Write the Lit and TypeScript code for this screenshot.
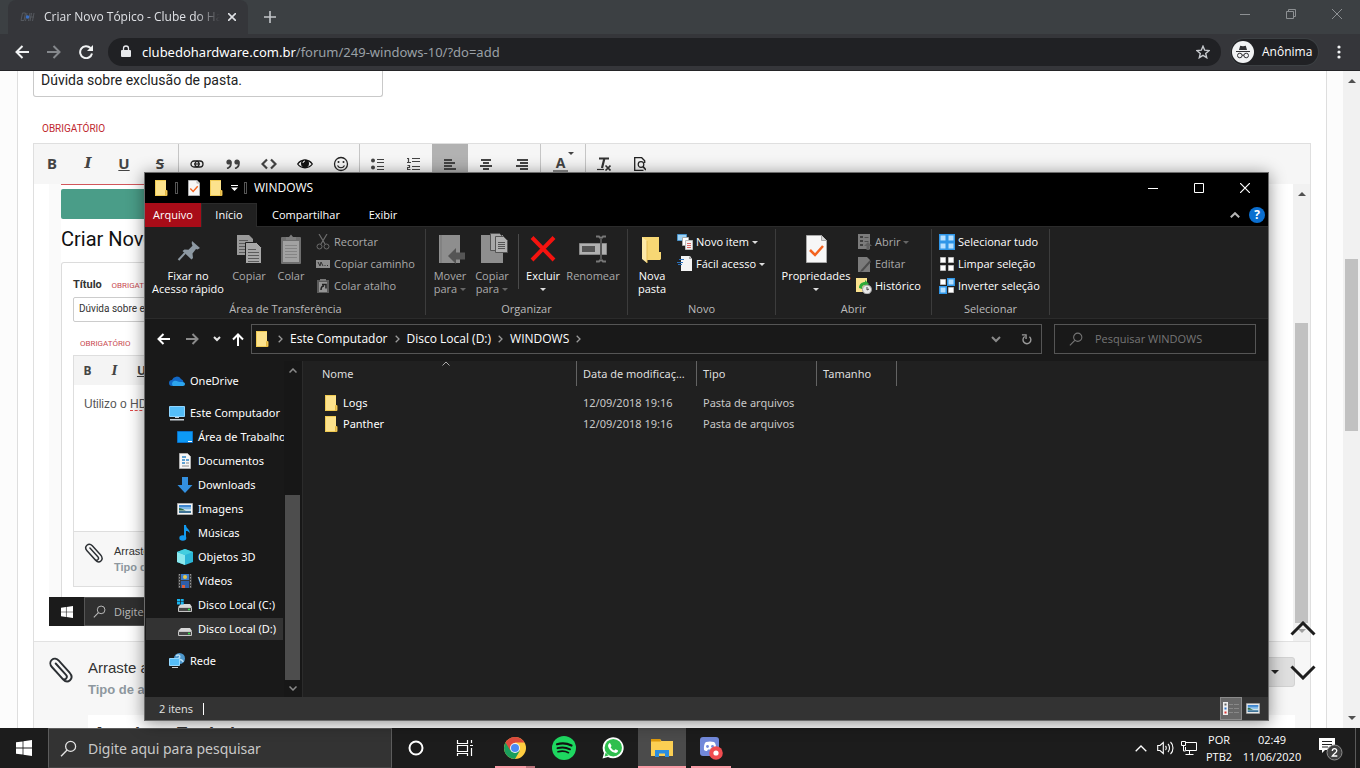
import { LitElement, html, svg, css } from "lit";
import { customElement } from "lit/decorators.js";
import { classMap } from "lit/directives/class-map.js";

const icon = (w: number, h: number, body: unknown, vb = `0 0 ${w} ${h}`) =>
  html`<svg width=${w} height=${h} viewBox=${vb} fill="none" aria-hidden="true">${body}</svg>`;

const line = (d: string, color: string, width = 1) =>
  svg`<path d=${d} stroke=${color} stroke-width=${width} fill="none"/>`;

/* ---------- shared glyphs ---------- */
const folder = () => icon(14, 16, svg`
  <path d="M1 0h11v11h1v5H1z" fill="#fce28c"/>
  <path d="M1 0h11v1H2v14h10v1H1z" fill="#f0ca52"/>
  <path d="M11.500 10.500h1.500v5h-1.500z" fill="#f9d877" stroke="#e3b63f"/>`);

const sheetCheck = (w: number, h: number) => icon(w, h, svg`
  <path d="M.5.5h15l5 5v22H.5z" fill="#f7f7f7" stroke="#a8a8a8"/>
  <path d="M15.500.5v5h5" fill="#d8d8d8" stroke="#a8a8a8"/>
  <path d="M4 15l5 5 8-9" stroke="#f4631e" stroke-width="2.500"/>`, "0 0 21 28");

const magnifier = (size: number, color: string) => icon(size, size, svg`
  <circle cx="10" cy="6" r="4.700" stroke=${color} stroke-width="1.200"/>
  <path d="M6.700 9.500L1 15.200" stroke=${color} stroke-width="1.300"/>`, "0 0 16 16");

const winLogo = (size: number) => icon(size, size, svg`
  <path d="M0 2.300L6.600 1.400V7.600H0zM7.400 1.300L16 0v7.600H7.400zM0 8.400h6.600v6.200L0 13.700zM7.400 8.400H16V16l-8.600-1.200z" fill="#fff"/>`, "0 0 16 16");

const clip = (size: number) => icon(size, size, svg`
  <path d="M7.200 6.500l10.300 11.300c1.300 1.500.9 3-.1 3.900-1.100.9-2.700.8-3.900-.5L3.400 10C1.300 7.600 1.300 4.700 3.300 2.900 5.400 1.100 8.300 1.500 10.300 3.700l10.600 11.700c2.700 3.100 2.600 6.100.6 7.900-1.700 1.500-4.500 1.700-7-.9L6.300 13.200" stroke="#2b2f33" stroke-width="1.900" stroke-linecap="round"/>`, "0 0 25 26");

const caret = (color: string) => icon(6, 3, svg`<path d="M0 0h6L3 3z" fill=${color}/>`);
const arrowUp = (color: string) => icon(8, 4, svg`<path d="M0 4h8L4 0z" fill=${color}/>`);
const arrowDown = (color: string) => icon(8, 4, svg`<path d="M0 0h8L4 4z" fill=${color}/>`);

const picture = (w: number, h: number) => icon(w, h, svg`
  <path d="M.5.5h15v11H.5z" fill="#f5f5f5" stroke="#a9a9a9"/>
  <path d="M2 2h12v8H2z" fill="#7db7e8"/><path d="M2 2h12v2H2z" fill="#3f86cf"/>
  <path d="M2 6c4-1 7 1 12 0v4H2z" fill="#cfe5ee"/><path d="M2 5c3 0 5 2 7 2.500H2z" fill="#2e6b45"/><path d="M2 8h12v2H2z" fill="#3e7397"/>`, "0 0 16 12");

const reset = css`
  *, *::before, *::after { box-sizing: border-box; }
  button, input { font: inherit; color: inherit; background: none; border: 0; padding: 0; margin: 0; border-radius: 0; outline: 0; min-width: 0; }
  a { color: inherit; text-decoration: none; }
  svg { display: block; flex: none; }
`;

/* ---------- browser frame ---------- */
@customElement("browser-frame")
export class BrowserFrame extends LitElement {
  static styles = [reset, css`
    :host { display: block; color: #e8eaed; font: 12px/16px "Open Sans", sans-serif; }
    .strip { display: flex; height: 34px; background: #3c4043; padding-left: 8px; }
    .tab { display: flex; align-items: center; width: 240px; background: #35363a; border-radius: 8px 8px 0 0; padding: 0 8px 0 12px; }
    .title { flex: 1; margin: 0 4px 0 8px; white-space: nowrap; overflow: hidden; color: #dfe1e5;
      -webkit-mask-image: linear-gradient(90deg, #000 86%, transparent); mask-image: linear-gradient(90deg, #000 86%, transparent); }
    .icon { display: grid; place-items: center; width: 16px; height: 34px; }
    .plus { width: 44px; }
    .captions { display: flex; margin-left: auto; }
    .captions .icon { width: 46px; height: 28px; }
    .bar { display: flex; align-items: center; height: 37px; background: #35363a; border-bottom: 1px solid #242427; padding: 0 8px 0 6px; }
    .nav { width: 32px; }
    .omni { display: flex; align-items: center; flex: 1; height: 28px; margin: 0 10px 0 6px; padding: 0 11px 0 12px; border-radius: 14px; background: #202124; font: 13px/18px "Noto Sans", sans-serif; }
    .url { flex: 1; margin-left: 10px; color: #9aa0a6; white-space: nowrap; }
    .url b { font-weight: 400; color: #fff; }
    .profile { display: flex; align-items: center; gap: 8px; height: 26px; width: 87px; padding: 0 8px 0 1px; border-radius: 13px; background: #202124; box-shadow: 0 0 0 1px #3c4043; color: #fff; }
    .menu { width: 26px; margin-left: 8px; }
  `];
  render() {
    return html`
      <div class="strip">
        <div class="tab">
          ${icon(16, 10, svg`<path d="M2.500 1h3L4 8.500H1zM7 1L5.500 9M10 1L8.500 9M14 1l-1.500 8M11.500 1L10 9M10 5h4" stroke="#54585e"/><circle cx="7.500" cy="5" r="1.800" fill="#3a6fc4"/>`)}
          <span class="title">Criar Novo Tópico - Clube do Hardware</span>
          <button class="icon" aria-label="Fechar guia">${icon(8, 8, line("M0 0l8 8M8 0L0 8", "#dfe1e5", 1.6))}</button>
        </div>
        <button class="icon plus" aria-label="Nova guia">${icon(12, 12, line("M6 0v12M0 6h12", "#c3c6ca", 1.6))}</button>
        <div class="captions">
          <button class="icon" aria-label="Minimizar">${icon(10, 10, line("M0 5.500h10", "#8d9093"))}</button>
          <button class="icon" aria-label="Restaurar">${icon(10, 10, line("M.5 2.500h7v7h-7zM2.500 2.500v-2h7v7h-2", "#8d9093"))}</button>
          <button class="icon" aria-label="Fechar">${icon(10, 10, line("M0 0l10 10M10 0L0 10", "#8d9093"))}</button>
        </div>
      </div>
      <div class="bar">
        <button class="icon nav" aria-label="Voltar">${icon(14, 14, line("M14 7H1.500M7.500 1l-6 6 6 6", "#f1f3f4", 2))}</button>
        <button class="icon nav" aria-label="Avançar">${icon(14, 14, line("M0 7h12.500M6.500 1l6 6-6 6", "#85888c", 2))}</button>
        <button class="icon nav" aria-label="Recarregar">${icon(14, 14, svg`<path d="M11.500 3A6 6 0 1 0 13 8.500" stroke="#f1f3f4" stroke-width="2"/><path d="M14 0v6H8z" fill="#f1f3f4"/>`)}</button>
        <div class="omni">
          ${icon(12, 14, svg`<path d="M2 5h8a1 1 0 0 1 1 1v5a1 1 0 0 1-1 1H2a1 1 0 0 1-1-1V6a1 1 0 0 1 1-1z" fill="#e8eaed"/><path d="M3.500 5V3.500a2.500 2.500 0 0 1 5 0V5" stroke="#e8eaed" stroke-width="1.300"/>`)}
          <a class="url" href="#"><b>clubedohardware.com.br</b>/forum/249-windows-10/?do=add</a>
          <button aria-label="Favoritos">${icon(14, 14, svg`<path d="M7 1.200l1.700 4 4.300.4-3.300 2.800 1 4.300L7 10.400l-3.700 2.300 1-4.300L1 5.600l4.300-.4z" stroke="#c6c9cd" stroke-width="1.400"/>`)}</button>
        </div>
        <button class="profile">
          ${icon(22, 22, svg`<circle cx="11" cy="11" r="11" fill="#f1f3f4"/><path d="M7 9l1.200-4.300L11 5.200l2.800-.5L15 9zM4 10h14v1H4z" fill="#303134"/><circle cx="7.800" cy="14.500" r="2.300" stroke="#303134"/><circle cx="14.200" cy="14.500" r="2.300" stroke="#303134"/><path d="M10 14.200h2" stroke="#303134"/>`)}
          Anônima
        </button>
        <button class="icon menu" aria-label="Menu">${icon(4, 14, svg`<circle cx="2" cy="2" r="1.600" fill="#f1f3f4"/><circle cx="2" cy="7" r="1.600" fill="#f1f3f4"/><circle cx="2" cy="12" r="1.600" fill="#f1f3f4"/>`)}</button>
      </div>`;
  }
}

/* ---------- forum page ---------- */
const listLines = (rows: number[][]) => rows.map(([x, w], i) => svg`<path d=${`M${x} ${i * 3 + 1}h${w}`} stroke="#444" stroke-width="2"/>`);

const tools: { label: string; art: unknown; on?: boolean }[][] = [
  [
    { label: "Negrito", art: html`<b>B</b>` },
    { label: "Itálico", art: html`<b class="serif"><i>I</i></b>` },
    { label: "Sublinhado", art: html`<b><u>U</u></b>` },
    { label: "Tachado", art: html`<b><s>S</s></b>` },
  ],
  [
    { label: "Link", art: icon(14, 8, svg`<rect x="1" y="1" width="8" height="6" rx="3" stroke="#222" stroke-width="1.300"/><rect x="5" y="1" width="8" height="6" rx="3" stroke="#222" stroke-width="1.300"/><path d="M4 4h6" stroke="#222" stroke-width="1.200"/>`) },
    { label: "Citação", art: icon(14, 10, svg`<circle cx="3" cy="3" r="2.600" fill="#444"/><circle cx="11" cy="3" r="2.600" fill="#444"/><path d="M4.600 2.500C5.500 6 4 8.500 1 9.500M12.600 2.500C13.500 6 12 8.500 9 9.500" stroke="#444" stroke-width="1.700"/>`) },
    { label: "Código", art: icon(16, 12, line("M6 1.500L1.500 6 6 10.500M10 1.500L14.500 6 10 10.500", "#444", 2.2)) },
    { label: "Spoiler", art: icon(16, 12, svg`<path d="M.7 6C4 1 12 1 15.300 6 12 11 4 11 .7 6z" stroke="#111" stroke-width="1.300"/><circle cx="8" cy="5.500" r="4" fill="#111"/><path d="M6 5a2 2 0 0 1 2-2" stroke="#fff"/>`) },
    { label: "Emoji", art: icon(16, 16, svg`<circle cx="8" cy="8" r="6.500" stroke="#222" stroke-width="1.300"/><circle cx="5.500" cy="6" r="1" fill="#222"/><circle cx="10.500" cy="6" r="1" fill="#222"/><path d="M4.500 9.500c1.500 3 5.500 3 7 0" stroke="#222" stroke-width="1.200"/>`) },
  ],
  [
    { label: "Marcadores", art: icon(14, 12, svg`<circle cx="2" cy="2.500" r="2" fill="#444"/><circle cx="2" cy="9.500" r="2" fill="#444"/>${line("M6 1.500h7M6 4.500h7M6 8.500h7M6 11.500h7", "#444")}`) },
    { label: "Numeração", art: icon(14, 14, line("M0 1.500h1.500V5M0 5.500h4M.5 8.500h2v2h-2v2h3M5 1.500h8M5 4.500h8M5 9.500h8M5 12.500h8", "#444", 1.2)) },
    { label: "Esquerda", on: true, art: icon(12, 11, listLines([[0, 8], [0, 11], [0, 8], [0, 12]])) },
    { label: "Centro", art: icon(12, 11, listLines([[1, 10], [3, 6], [0, 12], [3, 6]])) },
    { label: "Direita", art: icon(12, 11, listLines([[1, 11], [4, 8], [0, 12], [4, 8]])) },
  ],
];

@customElement("forum-page")
export class ForumPage extends LitElement {
  static styles = [reset, css`
    :host { display: flex; min-height: 0; background: #fcfcfc; color: #222; font: 14px/18px Roboto, sans-serif; }
    .sheet { display: flex; flex-direction: column; flex: 1; min-width: 0; margin: 0 16px 0 17px; padding: 0 15px; background: #fff; border: solid #dedede; border-width: 0 1px; }
    .title { width: 350px; height: 26px; padding: 0 7px 8px; border: 1px solid #c9c9c9; border-top: 0; border-radius: 0 0 3px 3px; }
    .must { color: #c0292f; font-size: 10px; line-height: 14px; padding: 25px 0 7px 9px; }
    .editor { display: flex; flex-direction: column; flex: 1; min-height: 0; border: 1px solid #dfdfdf; border-bottom: 0; }
    .tools { display: flex; height: 40px; background: #f6f6f6; }
    .group { display: flex; border-right: 1px solid #c6c6c6; }
    .group:last-child { border: 0; }
    .tool { display: grid; place-items: center; width: 36px; height: 40px; color: #444; font: 15px/20px "Noto Sans", sans-serif; }
    .tool b { line-height: 18px; padding-bottom: 2px; }
    .tool.on { background: #b2b2b2; }
    .tool.color { display: flex; width: 44px; align-items: center; padding-left: 12px; font-size: 14px; }
    .tool.color b { border-bottom: 3px solid #8a8a8a; line-height: 15px; width: 15px; padding: 0; }
    .tool.color svg { margin-bottom: 21px; }
    .serif { font-family: "DejaVu Serif", serif; }
    .canvas { display: flex; flex: 1; min-height: 0; }
    .post { flex: 1; min-width: 0; padding: 0 15px 15px; display: flex; }
    .shot { display: flex; flex-direction: column; width: 80%; background: #fafafa; color: #333; }
    .inner { flex: 1; display: flex; flex-direction: column; margin-left: 12px; background: #fff; }
    .red { height: 1px; background: #d2565b; }
    .green { height: 30px; margin-top: 4px; background: #4a9d88; border-radius: 2px; }
    .inner h2 { margin: 0; padding: 8px 0; font-size: 20px; line-height: 24px; font-weight: 400; height: 43px; color: #111; }
    .box { flex: 1; border: 1px solid #dcdcdc; border-radius: 3px 3px 0 0; border-bottom: 0; padding: 14px 12px 10px 11px; display: flex; flex-direction: column; font-size: 11px; line-height: 16px; }
    .box .tag { color: #c94c52; font-size: 8px; font-weight: 400; margin-left: 7px; }
    .field { height: 25px; border: 1px solid #ccc; border-radius: 2px; margin-top: 3px; padding: 3px 5px; font-size: 10px; color: #333; }
    .need { font-size: 8px; color: #c94c52; padding: 14px 0 3px 7px; }
    .mini { flex: 1; display: flex; flex-direction: column; border: 1px solid #dedede; }
    .minibar { display: flex; height: 29px; align-items: center; background: #f4f4f4; font: 12px/16px "Noto Sans", sans-serif; color: #444; }
    .minibar b { width: 27px; text-align: center; }
    .minitext { flex: 1; padding: 11px 10px; font: 12px/16px "Liberation Sans", sans-serif; color: #555; }
    .typo { display: inline-block; line-height: 12px; border-bottom: 1px dashed #e04848; }
    .minidrop { display: flex; height: 55px; gap: 10px; padding: 11px 10px; border-top: 1px solid #dedede; background: #f7f7f7; font: 11px/16px "Liberation Sans", sans-serif; }
    .minidrop b, .drop b { color: #8e989f; display: block; }
    .fakebar { display: flex; align-items: center; height: 29px; background: #1b1b1b; color: #bbb; font: 11px/16px "Open Sans", sans-serif; }
    .start { display: grid; place-items: center; width: 35px; }
    .find { display: flex; align-items: center; gap: 8px; width: 40%; height: 29px; padding-left: 8px; background: #303030; border: 1px solid #555; }
    .scroll { display: flex; flex-direction: column; align-items: center; width: 17px; background: #f1f1f1; padding: 8px 0; }
    .thumb { width: 13px; background: #c1c1c1; }
    .canvas .thumb { margin-top: auto; height: 68%; margin-bottom: 6px; }
    .page .thumb { height: 172px; margin-top: 176px; margin-bottom: auto; }
    .drop { display: grid; grid-template-columns: 40px 1fr auto; height: 87px; padding: 15px 15px 0 14px; border-top: 1px solid #e2e2e2; background: #f7f7f7; font: 15px/22px "Liberation Sans", sans-serif; color: #333; overflow: hidden; }
    .drop b { font-size: 13px; }
    .drop .text { height: 58px; }
    .choose { width: 160px; height: 30px; border: 1px solid #d2d2d2; border-radius: 3px; background: #dfdfdf; display: flex; align-items: center; justify-content: flex-end; padding-right: 15px; }
    .files { grid-column: 2 / 4; height: 40px; padding: 8px 5px 0; margin: 0; background: #fff; font: 700 18px/22px "Liberation Sans", sans-serif; white-space: nowrap; }
  `];
  render() {
    return html`
      <main class="sheet">
        <input class="title" aria-label="Título" value="Dúvida sobre exclusão de pasta." />
        <div class="must">OBRIGATÓRIO</div>
        <section class="editor">
          <div class="tools">
            ${tools.map((g) => html`<div class="group">${g.map((t) => html`<button class=${classMap({ tool: true, on: !!t.on })} aria-label=${t.label}>${t.art}</button>`)}</div>`)}
            <div class="group"><button class="tool color" aria-label="Cor do texto"><b>A</b>${caret("#444")}</button></div>
            <div class="group">
              <button class="tool" aria-label="Limpar formatação">${icon(14, 14, svg`${line("M2 1.500h10M7.500 1L5 11", "#333", 2.2)}${line("M0 12.500h7", "#333", 1.2)}${line("M8.500 8.500l5 5M13.500 8.500l-5 5", "#333", 1.6)}`)}</button>
              <button class="tool" aria-label="Visualizar">${icon(12, 14, svg`${line("M9.500 13.500H.7V.7h7l3 3V6", "#222", 1.3)}<circle cx="7" cy="7.500" r="2.800" stroke="#222" stroke-width="1.200"/><path d="M9 9.500l3 3.500" stroke="#222" stroke-width="1.700"/>`)}</button>
            </div>
          </div>
          <div class="canvas">
            <div class="post">
              <div class="shot">
                <div class="inner">
                  <div class="red"></div>
                  <div class="green"></div>
                  <h2>Criar Novo Tópico</h2>
                  <div class="box">
                    <div><b>Título</b> <span class="tag">OBRIGATÓRIO</span></div>
                    <div class="field">Dúvida sobre exclusão de pasta.</div>
                    <div class="need">OBRIGATÓRIO</div>
                    <div class="mini">
                      <div class="minibar"><b>B</b><b class="serif"><i>I</i></b><b><u>U</u></b></div>
                      <div class="minitext">Utilizo o <span class="typo">HD</span></div>
                      <div class="minidrop">${clip(20)}<div>Arraste arquivos aqui<b>Tipo de arquivos</b></div></div>
                    </div>
                  </div>
                </div>
                <div class="fakebar"><span class="start">${winLogo(12)}</span><span class="find">${magnifier(13, "#bbb")} Digite aqui para pesquisar</span></div>
              </div>
            </div>
            <div class="scroll">${arrowUp("#505050")}<div class="thumb"></div>${arrowDown("#a0a0a0")}</div>
          </div>
          <div class="drop">
            ${clip(26)}
            <div class="text">Arraste arquivos aqui para anexar<b>Tipo de arquivos aceitos</b></div>
            <button class="choose" aria-label="Inserir outra mídia">${arrowDown("#222")}</button>
            <h3 class="files">Arquivos Enviados</h3>
          </div>
        </section>
      </main>
      <div class="scroll page">${arrowUp("#505050")}<div class="thumb"></div>${arrowDown("#505050")}</div>`;
  }
}

/* ---------- file explorer ---------- */
const art = {
  pin: () => icon(32, 32, svg`<path d="M20 8l8 7-2.500 1.500-1.500-.5-3.500 4.500.5 4.500-1.500 1.500-9-8.500 2-1.500 4 .3 4-4-.8-2.500z" fill="#8d99a3"/><path d="M13 20L6.500 27" stroke="#8d99a3" stroke-width="2"/>`),
  copy: () => icon(32, 32, svg`<path d="M4 2h12l4 4v16H4z" fill="#9a9a9a"/>${line("M6 7.500h9M6 10.500h10M6 13.500h7M6 16.500h7M6 19.500h7", "#5c5c5c")}<path d="M12.500 9.500h11l5 5v16h-16z" fill="#a8a8a8" stroke="#202020"/>${line("M15 16.500h8M15 19.500h11M15 22.500h11M15 25.500h11M15 28.500h11", "#5c5c5c")}`),
  paste: () => icon(32, 32, svg`<rect x="6" y="4" width="20" height="27" rx="1" fill="#6f6f6f"/><path d="M8 8h16v21H8z" fill="#a2a2a2"/><path d="M11 7V4h3l2-2.500L18 4h3v3z" fill="#7d7d7d"/>${line("M10 12.500h12M10 15.500h12M10 18.500h12M10 21.500h12M10 24.500h12", "#858585")}`),
  move: () => icon(32, 32, svg`<path d="M5 2h21v28H5z" fill="#8e8e8e"/><path d="M7 2v28" stroke="#777"/><path d="M14 23l8-8v4.500h9v7h-9V31z" fill="#555"/>`),
  copyTo: () => icon(32, 32, svg`<path d="M5 2h22v28H5z" fill="#8e8e8e"/><path d="M14.500.5h9l3 3v14h-12z" fill="#a8a8a8" stroke="#555"/><path d="M19.500 3.500h8l4 4v12h-12z" fill="#b0b0b0" stroke="#555"/>${line("M22 9.500h7M22 11.500h7M22 13.500h7M22 15.500h7", "#555")}`),
  del: () => icon(32, 32, svg`<path d="M5 4.500L27 27M27 4.500L5 27" stroke="#f5130f" stroke-width="4"/>`),
  rename: () => icon(32, 32, svg`<path d="M2.500 10.500h27v11h-27z" fill="#b0b0b0" stroke="#888"/><path d="M5 13h13v6H5z" fill="#555"/>${line("M19 3.500h3l2 2 2-2h3M19 28.500h3l2-2 2 2h3", "#777", 2)}<path d="M24 5v22" stroke="#555" stroke-width="2"/>`),
  newFolder: () => icon(32, 32, svg`<path d="M6 4h17v15h2v7l-1 1H8z" fill="#f7d774"/><path d="M6 4l5 4v22l-5-4z" fill="#fde9a7"/><path d="M11 8v22" stroke="#e5bc55"/>`),
  cut: () => icon(16, 16, svg`${line("M4 0l6 10M12 0L6 10", "#7a7a7a", 1.2)}<circle cx="4.500" cy="12.500" r="2.500" stroke="#7a7a7a"/><circle cx="11.500" cy="12.500" r="2.500" stroke="#7a7a7a"/>`),
  path: () => icon(16, 16, svg`<path d="M1 4h14v8H1z" fill="#a0a0a0"/>${line("M3 6l2 4 1-4 2 4M9.500 9.500h1M12 9.500h1", "#333")}`),
  pasteLink: () => icon(16, 16, svg`<path d="M2 2h12v13H2z" fill="#666"/><path d="M4 4h8v10H4z" fill="#aaa"/><path d="M5 1h6v2H5z" fill="#888"/><path d="M6 12c0-3 1-4 3-4M7 6.500h4v4" stroke="#222" stroke-width="1.500"/>`),
  newItem: () => icon(16, 16, svg`<path d="M.5.5h9v6h-9z" fill="#9fd3f5" stroke="#4a94cc"/><path d="M5.500 3.500h6v8h-6z" fill="#fff" stroke="#aaa"/><path d="M8.500 6.500h7v9h-7z" fill="#f4f4f4" stroke="#bbb"/>${line("M10 9.500h4M10 11.500h4M10 13.500h4", "#d66")}`),
  easy: () => icon(16, 16, svg`<path d="M4 0h9l2 3v12H4z" fill="#f4f4f4"/><path d="M12 0v3h3z" fill="#aaa"/>${line("M2 3.500h5M0 6.500h6M1 8.500h4", "#2b6fb8", 1.2)}`),
  open: () => icon(16, 16, svg`<path d="M2 0h12v15H2z" fill="#8c8c8c"/>${line("M4 3h3M4 7h3M4 11h3", "#444", 2)}${line("M8.500 3.500h4M8.500 7.500h4", "#555")}<path d="M8 12l4-4 4 4h-2.500v4h-3v-4z" fill="#6a6a6a"/>`),
  edit: () => icon(16, 16, svg`<path d="M2 1h9l3 3v12H2z" fill="#8c8c8c"/><path d="M14 4L5 14l-1 2 3-1 8-9z" fill="#555"/>`),
  history: () => icon(16, 16, svg`<path d="M0 0h11v14H0z" fill="#fbe28e"/><path d="M3 10c0-4 3-6 6-6V2l4 4-4 3V7c-2 0-3 1-3 4z" fill="#2faa3a"/><circle cx="11" cy="11.500" r="4.500" fill="#e8e8e8" stroke="#999"/>${line("M11 9v3l2-1", "#444")}`),
  squares: (fills: boolean[]) => icon(16, 16, fills.map((on, i) => {
    const x = (i % 2) * 8, y = Math.floor(i / 2) * 8;
    return on
      ? svg`<path d=${`M${x} ${y}h8v8h-8z`} fill="#2f96e8"/><path d=${`M${x + 1.5} ${y + 1.5}h5v5h-5z`} fill="#b7e0ff"/>`
      : svg`<path d=${`M${x + 1.5} ${y + 1.5}h5v5h-5z`} fill="#fff" stroke="#bbb"/>`;
  })),
};

const drive = (c: boolean) => icon(16, 14, svg`
  <path d="M4 6h9l2 3H1z" fill="#d8d8d8"/><path d="M1.500 9.500h13v4h-13z" fill="#484848" stroke="#c4c4c4"/><path d="M11 11.500h2" stroke="#35e04a" stroke-width="1.500"/>
  ${c ? svg`<path d="M0 1h3v2.500H0zM3.700 1h3v2.500h-3zM0 4h3v2.500H0zM3.700 4h3v2.500h-3z" fill="#19b4ef"/>` : ""}`);

type NavItem = { text: string; art: unknown; level: number; gap?: boolean; on?: boolean };
const navItems: NavItem[] = [
  { text: "OneDrive", level: 0, art: icon(16, 12, svg`<path d="M3 11a3 3 0 0 1 0-6 5 5 0 0 1 9-1 4 4 0 0 1 1 7z" fill="#1269c7"/><path d="M4 11a3 3 0 0 1 1-5c3-1 4 1 6 1s5 0 5 2-2 2-3 2z" fill="#2da5ee"/>`) },
  { text: "Este Computador", level: 0, gap: true, art: icon(16, 15, svg`<path d="M.5.5h15v10H.5z" fill="#54bdf8" stroke="#8fd5ff"/><path d="M6 11h4v1H6zM1 13h14v1.500H1z" fill="#c8d0d6"/>`) },
  { text: "Área de Trabalho", level: 1, art: icon(16, 12, svg`<path d="M.5.5h15v11H.5z" fill="#0d99f5" stroke="#0a70c8"/><path d="M11 10.500h4" stroke="#fff"/>`) },
  { text: "Documentos", level: 1, art: icon(16, 16, svg`<path d="M2.500.5h8l3 3v12h-11z" fill="#f6f6f6" stroke="#b0b0b0"/>${line("M5 4h4M5 7h3M9 7h3M5 10h3", "#2e86c7", 1.4)}${line("M5 13h7M9 10h3", "#8a8a8a")}`) },
  { text: "Downloads", level: 1, art: icon(16, 16, svg`<path d="M5 0h6v8h4.500L8 16 .5 8H5z" fill="#3390e0"/>`) },
  { text: "Imagens", level: 1, art: picture(16, 12) },
  { text: "Músicas", level: 1, art: icon(16, 16, svg`<path d="M7 12.500V0h2c0 4 4.500 4 3.500 8.500C12 6.500 10.500 6 9 6v7" fill="#129af0"/><ellipse cx="5.800" cy="13" rx="3.500" ry="2.700" fill="#129af0"/>`) },
  { text: "Objetos 3D", level: 1, art: icon(16, 16, svg`<path d="M0 3l8-3 8 3v10l-8 3-8-3z" fill="#2cb6d8"/><path d="M0 3l8 3v10l-8-3z" fill="#8be9ee"/><path d="M0 3l8-3 8 3-8 3z" fill="#43cfe0"/>`) },
  { text: "Vídeos", level: 1, art: icon(16, 16, svg`<path d="M1 1h14v14H1z" fill="#3a3a3a"/><path d="M4 1h8v6H4z" fill="#3b7ccc"/><path d="M4 8h8v7H4z" fill="#2e5ea8"/><circle cx="8" cy="4" r="2" fill="#e8c84a"/><path d="M5 12h3v3H5z" fill="#d8603a"/><path d="M2.500 1v14M13.500 1v14" stroke="#999" stroke-dasharray="1.500 1.500"/>`) },
  { text: "Disco Local (C:)", level: 1, art: drive(true) },
  { text: "Disco Local (D:)", level: 1, art: drive(false), on: true },
  { text: "Rede", level: 0, gap: true, art: icon(16, 16, svg`<circle cx="10.500" cy="5.500" r="5.500" fill="#4d97cc"/><path d="M7 3c3-2 5 0 3 2s4 1 4 4" stroke="#b9dff5" stroke-width="1.500"/><path d="M.5 5.500h10v7H.5z" fill="#55bdf8" stroke="#95d8ff"/><path d="M3 14.500h6" stroke="#d0d0d0"/>`) },
];

const crumbArrow = () => icon(5, 8, line("M.7.7L4 4 .7 7.300", "#9a9a9a", 1.3));

@customElement("explorer-window")
export class ExplorerWindow extends LitElement {
  static styles = [reset, css`
    :host { display: flex; flex-direction: column; background: #191919; color: #fff; border: 1px solid #6b6b6b; font: 11px/16px "Open Sans", sans-serif; box-shadow: 0 2px 16px rgba(0, 0, 0, .45); white-space: nowrap; }
    .titlebar { display: flex; align-items: center; height: 30px; background: #000; padding-left: 9px; }
    .quick { display: grid; place-items: center; width: 14px; }
    .mark { width: 3px; height: 12px; border: 1px solid #555; margin: 0 9px 0 7px; }
    .quick + .quick { margin-left: 8px; }
    .more { margin-left: 8px; }
    .more + .mark { margin: 0 7px 0 6px; }
    .titlebar .name { font-size: 12px; }
    .captions { display: flex; margin-left: auto; }
    .cap { display: grid; place-items: center; width: 46px; height: 30px; }
    .tabs { display: flex; align-items: center; height: 24px; background: #000; border-bottom: 1px solid #2b2b2b; padding-right: 3px; }
    .tab { height: 24px; width: 56px; display: grid; place-items: center; }
    .tab.menu { background: #a80c18; }
    .tab.on { background: #202020; border: solid #2b2b2b; border-width: 1px 1px 0; width: 56px; }
    .tab.wide { width: 98px; }
    .tools { display: flex; align-items: center; gap: 9px; margin-left: auto; }
    .help { display: grid; place-items: center; width: 16px; height: 16px; border-radius: 50%; background: #0b6fd0; font-weight: 700; font-size: 12px; }
    .ribbon { display: flex; height: 92px; background: #202020; border-bottom: 1px solid #2b2b2b; }
    .group { display: flex; flex-direction: column; height: 86px; margin-top: 2px; padding: 2px 0 0; border-right: 1px solid #3c3c3c; }
    .cmds { display: flex; height: 71px; flex: none; }
    .cap-label { text-align: center; color: #bbb; line-height: 14px; }
    .clipg { width: 281px; padding-left: 1px; } .orgg { width: 202px; } .newg { width: 148px; } .openg { width: 156px; } .selg { width: 118px; }
    .orgg .cmds, .newg .cmds { padding-left: 3px; }
    .openg .cmds { padding-left: 4px; }
    .selg .cmds { padding-left: 6px; }
    .big { display: flex; flex-direction: column; align-items: center; padding-top: 2px; line-height: 13px; justify-content: flex-start; height: 66px; }
    .big svg { margin-bottom: 4px; }
    .big .two { display: flex; align-items: center; gap: 3px; height: 13px; }
    .big .two svg { margin: 1px 0 0; }
    .off { color: #aaa; }
    .w84 { width: 84px; } .w38 { width: 38px; } .w46 { width: 46px; } .w42 { width: 42px; } .w62 { width: 62px; } .w72 { width: 72px; }
    .rule { width: 1px; margin: 3px 5px 13px; background: #4a4a4a; }
    .smalls { display: flex; flex-direction: column; padding-left: 1px; }
    .newg .smalls, .openg .smalls { padding-left: 4px; }
    .small { display: flex; align-items: center; gap: 3px; height: 22px; text-align: left; }
    .small svg + svg { margin-left: 1px; }
    .small.off svg:first-child { opacity: .85; }
    .sheet { padding: 2px 0; }
    .nav { display: flex; align-items: center; height: 42px; padding: 0 12px 2px 4px; }
    .go { display: grid; place-items: center; width: 29px; height: 28px; }
    .go.thin { width: 19px; } .go.up { width: 24px; margin-right: 1px; }
    .address { display: flex; align-items: center; flex: 1; height: 30px; border: 1px solid #555; padding-left: 3px; font-size: 12px; }
    .address > svg { margin-right: 2px; }
    .address .crumb { margin: 0 7px; }
    .address .end { display: flex; margin-left: auto; }
    .address .end button { display: grid; place-items: center; width: 30px; height: 28px; }
    .search { display: flex; align-items: center; width: 202px; height: 30px; margin-left: 12px; border: 1px solid #555; padding: 0 12px 0 14px; gap: 12px; }
    .search input { flex: 1; }
    .search input::placeholder { color: #767676; opacity: 1; }
    .body { display: flex; flex: 1; min-height: 0; font-family: "Noto Sans", sans-serif; }
    .tree { width: 139px; overflow: hidden; padding-top: 8px; }
    .item { display: flex; align-items: center; gap: 5px; height: 22px; margin: 1px 1px 2px 1px; padding-left: 23px; }
    .item.sub { padding-left: 31px; }
    .item.gap { margin-top: 10px; }
    .item.on { background: #333; }
    .item .art { display: grid; place-items: center; width: 16px; height: 16px; }
    .bar { display: flex; flex-direction: column; align-items: center; justify-content: space-between; width: 18px; background: #171717; padding: 7px 1px 6px 0; }
    .bar .thumb { width: 15px; height: 185px; background: #4d4d4d; margin: auto 0 6px; }
    .list { flex: 1; background: #202020; border-left: 1px solid #2b2b2b; min-width: 0; }
    table { border-collapse: collapse; table-layout: fixed; width: 594px; }
    th { height: 26px; padding: 0 8px 0 6px; text-align: left; font-weight: 400; color: #dedede; overflow: hidden; text-overflow: ellipsis;
      background: linear-gradient(#636363, #636363) right top / 1px 25px no-repeat; }
    th:nth-child(2) { padding-right: 10px; }
    th:first-child { padding-left: 19px; position: relative; }
    .sort { position: absolute; left: 139px; top: 0; }
    td { height: 21px; padding: 0 6px; color: #c8c8c8; }
    td:first-child { padding-left: 21px; color: #fff; }
    tbody::before { content: ""; display: block; height: 5px; }
    .file { display: flex; align-items: center; gap: 5px; }
    .c1 { width: 274px; } .c2 { width: 120px; } .c4 { width: 80px; }
    .status { display: flex; align-items: center; height: 23px; background: #333; padding-left: 14px; color: #e4e4e4; }
    .status .tick { width: 1px; height: 12px; background: #fff; margin-left: 10px; }
    .views { display: flex; margin-left: auto; padding-right: 4px; }
    .view { display: grid; place-items: center; width: 22px; height: 23px; }
    .view.on { background: #686868; border: 1px solid #8a8a8a; }
  `];

  private big(cls: string, art: unknown, l1: string, l2: unknown = "", off = false) {
    return html`<button class="big ${cls} ${off ? "off" : ""}">${art}<span>${l1}</span><span class="two">${l2}</span></button>`;
  }
  private small(art: unknown, text: string, off = false, tail: unknown = "") {
    return html`<button class="small ${off ? "off" : ""}">${art}<span>${text}</span>${tail}</button>`;
  }

  render() {
    return html`
      <div class="titlebar">
        <span class="quick">${folder()}</span><span class="mark"></span>
        <button class="quick" aria-label="Propriedades">${sheetCheck(12, 16)}</button>
        <button class="quick" aria-label="Nova pasta">${folder()}</button>
        <button class="more" aria-label="Personalizar">${icon(7, 6, svg`${line("M0 .5h7", "#fff")}<path d="M0 2.500h7L3.500 6z" fill="#fff"/>`)}</button>
        <span class="mark"></span>
        <span class="name">WINDOWS</span>
        <div class="captions">
          <button class="cap" aria-label="Minimizar">${icon(10, 10, line("M0 5.500h10", "#fff"))}</button>
          <button class="cap" aria-label="Maximizar">${icon(10, 10, line("M.5.5h9v9h-9z", "#fff"))}</button>
          <button class="cap" aria-label="Fechar">${icon(10, 10, line("M0 0l10 10M10 0L0 10", "#fff", 1.2))}</button>
        </div>
      </div>
      <div class="tabs">
        <button class="tab menu">Arquivo</button><button class="tab on">Início</button>
        <button class="tab wide">Compartilhar</button><button class="tab">Exibir</button>
        <div class="tools">
          <button aria-label="Recolher">${icon(10, 6, line("M.8 5.300L5 1.200l4.200 4.100", "#b5b5b5", 2))}</button>
          <button class="help" aria-label="Ajuda">?</button>
        </div>
      </div>
      <div class="ribbon">
        <div class="group clipg">
          <div class="cmds">
            ${this.big("w84", art.pin(), "Fixar no", "Acesso rápido")}
            ${this.big("w38", art.copy(), "Copiar", "", true)}
            ${this.big("w46", art.paste(), "Colar", "", true)}
            <div class="smalls">
              ${this.small(art.cut(), "Recortar", true)}${this.small(art.path(), "Copiar caminho", true)}${this.small(art.pasteLink(), "Colar atalho", true)}
            </div>
          </div>
          <div class="cap-label">Área de Transferência</div>
        </div>
        <div class="group orgg">
          <div class="cmds">
            ${this.big("w42", art.move(), "Mover", html`para ${caret("#666")}`, true)}
            ${this.big("w42", art.copyTo(), "Copiar", html`para ${caret("#666")}`, true)}
            <span class="rule"></span>
            ${this.big("w38", art.del(), "Excluir", caret("#ddd"))}
            ${this.big("w62", art.rename(), "Renomear", "", true)}
          </div>
          <div class="cap-label">Organizar</div>
        </div>
        <div class="group newg">
          <div class="cmds">
            ${this.big("w42", art.newFolder(), "Nova", "pasta")}
            <div class="smalls">
              ${this.small(art.newItem(), "Novo item", false, caret("#ddd"))}${this.small(art.easy(), "Fácil acesso", false, caret("#ddd"))}
            </div>
          </div>
          <div class="cap-label">Novo</div>
        </div>
        <div class="group openg">
          <div class="cmds">
            ${this.big("w72", html`<span class="sheet">${sheetCheck(21, 28)}</span>`, "Propriedades", caret("#ddd"))}
            <div class="smalls">
              ${this.small(art.open(), "Abrir", true, caret("#666"))}${this.small(art.edit(), "Editar", true)}${this.small(art.history(), "Histórico")}
            </div>
          </div>
          <div class="cap-label">Abrir</div>
        </div>
        <div class="group selg">
          <div class="cmds">
            <div class="smalls">
              ${this.small(art.squares([true, true, true, true]), "Selecionar tudo")}${this.small(art.squares([false, false, false, false]), "Limpar seleção")}${this.small(art.squares([false, true, true, false]), "Inverter seleção")}
            </div>
          </div>
          <div class="cap-label">Selecionar</div>
        </div>
      </div>
      <div class="nav">
        <button class="go" aria-label="Voltar">${icon(13, 12, line("M13 6H1.500M6.500 1l-5 5 5 5", "#fff", 2))}</button>
        <button class="go" aria-label="Avançar">${icon(13, 12, line("M0 6h11.500M6.500 1l5 5-5 5", "#8a8a8a", 2))}</button>
        <button class="go thin" aria-label="Locais recentes">${icon(8, 6, line("M1 1l3 3 3-3", "#e6e6e6", 2))}</button>
        <button class="go up" aria-label="Acima">${icon(12, 13, line("M6 13V1.500M1 6.500l5-5 5 5", "#fff", 2))}</button>
        <div class="address">
          ${folder()}<span class="crumb">${crumbArrow()}</span>
          <a href="#">Este Computador</a><span class="crumb">${crumbArrow()}</span>
          <a href="#">Disco Local (D:)</a><span class="crumb">${crumbArrow()}</span>
          <a href="#">WINDOWS</a><span class="crumb">${crumbArrow()}</span>
          <div class="end">
            <button aria-label="Locais anteriores">${icon(10, 7, line("M1 1l4 4 4-4", "#8a8a8a", 2))}</button>
            <button aria-label="Atualizar">${icon(11, 12, svg`${line("M8.200 3.500A4.300 4.300 0 1 1 3 3.300M0 1.500h4.500V6", "#9a9a9a", 1.5)}`, "-1 0 12 12")}</button>
          </div>
        </div>
        <label class="search">${magnifier(14, "#767676")}<input placeholder="Pesquisar WINDOWS" aria-label="Pesquisar WINDOWS" /></label>
      </div>
      <div class="body">
        <nav class="tree">
          ${navItems.map((n) => html`<a href="#" class=${classMap({ item: true, sub: n.level === 1, gap: !!n.gap, on: !!n.on })}><span class="art">${n.art}</span><span>${n.text}</span></a>`)}
        </nav>
        <div class="bar">
          ${icon(8, 5, line("M.5 4.500L4 1l3.500 3.500", "#8a8a8a", 1.5))}
          <div class="thumb"></div>
          ${icon(8, 5, line("M.5.5L4 4 7.500.5", "#8a8a8a", 1.5))}
        </div>
        <div class="list">
          <table>
            <thead><tr><th class="c1">Nome<span class="sort">${icon(8, 5, line("M.5 4.500L4 1l3.500 3.500", "#aaa"))}</span></th><th class="c2">Data de modificação</th><th class="c2">Tipo</th><th class="c4">Tamanho</th></tr></thead>
            <tbody>
              ${["Logs", "Panther"].map((f) => html`<tr><td><span class="file">${folder()}${f}</span></td><td>12/09/2018 19:16</td><td>Pasta de arquivos</td><td></td></tr>`)}
            </tbody>
          </table>
        </div>
      </div>
      <div class="status">2 itens<span class="tick"></span>
        <div class="views">
          <button class="view on" aria-label="Detalhes">${icon(16, 13, svg`<path d="M0 0h5v13H0z" fill="#eee"/><path d="M1.500 1.500h2v2h-2z" fill="#666"/><path d="M1.500 5.500h2v2h-2z" fill="#37c"/><path d="M1.500 9.500h2v2h-2z" fill="#d33"/>${line("M6 2.500h4M11 2.500h5M6 6.500h4M11 6.500h5M6 10.500h4M11 10.500h5", "#888")}`)}</button>
          <button class="view" aria-label="Ícones grandes">${picture(14, 11)}</button>
        </div>
      </div>`;
  }
}

/* ---------- task bar ---------- */
@customElement("task-bar")
export class TaskBar extends LitElement {
  static styles = [reset, css`
    :host { display: flex; height: 40px; background: #1c1c1c; color: #fff; font: 11px/17px "Open Sans", sans-serif; }
    .cell { display: grid; place-items: center; width: 48px; height: 40px; }
    .search { display: flex; align-items: center; gap: 11px; width: 344px; padding: 0 11px; background: #333; border: 1px solid #5c5c5c; border-bottom-color: #444; font: 14px/20px "Noto Sans", sans-serif; }
    .search input { flex: 1; height: 24px; }
    .search input::placeholder { color: #c8c8c8; opacity: 1; }
    .apps { display: flex; gap: 1px; margin-left: 3px; }
    .run { background: linear-gradient(#f99aa5, #f99aa5) center bottom / 40px 2px no-repeat; }
    .multi { background: linear-gradient(90deg, #f99aa5 31px, #bb747c 31px) center bottom / 40px 2px no-repeat; }
    .on { background: linear-gradient(#f99aa5, #f99aa5) center bottom / 48px 2px no-repeat #4b4b4b; }
    .tray { display: flex; align-items: center; margin-left: auto; padding-right: 4px; text-align: center; }
    .t { display: grid; place-items: center; width: 24px; height: 40px; }
    .lang { width: 36px; } .clock { width: 70px; } .note { width: 48px; }
    .edge { width: 1px; height: 40px; background: #5a5a5a; }
  `];
  render() {
    return html`
      <button class="cell" aria-label="Iniciar">${winLogo(16)}</button>
      <label class="search">${magnifier(17, "#e4e4e4")}<input placeholder="Digite aqui para pesquisar" aria-label="Pesquisar" /></label>
      <button class="cell" aria-label="Cortana">${icon(16, 16, svg`<circle cx="8" cy="8" r="6.500" stroke="#fff" stroke-width="2"/>`)}</button>
      <button class="cell" aria-label="Visão de tarefas">${icon(17, 16, line("M1.500 0v3.500h10V0M1.500 5.500h10v6h-10zM1.500 16v-2.500h10V16M15.500 0v3M15.500 8v8M14 5.500h3", "#fff", 1.2))}</button>
      <div class="apps">
        <button class="cell multi" aria-label="Google Chrome">${icon(22, 22, svg`<circle cx="11" cy="11" r="11" fill="#ffcd40"/><path d="M1.500 5.500A11 11 0 0 0 11 22l4.800-8.300L11 11z" fill="#1a9e5c"/><path d="M1.500 5.500A11 11 0 0 1 20.500 5.500H11L6 13z" fill="#dd4b3e"/><circle cx="11" cy="11" r="5" fill="#f4f4f4"/><circle cx="11" cy="11" r="4" fill="#4a8af4"/>`)}</button>
        <button class="cell" aria-label="Spotify">${icon(24, 24, svg`<circle cx="12" cy="12" r="12" fill="#1ed760"/><path d="M5 8.300c5-1.500 10-1 14.500 1.200" stroke="#111" stroke-width="2.200" stroke-linecap="round"/><path d="M5.500 12.200c4.500-1.300 8.500-.9 12.500 1.100" stroke="#111" stroke-width="1.900" stroke-linecap="round"/><path d="M6 15.700c4-1 7.500-.7 10.500 1" stroke="#111" stroke-width="1.600" stroke-linecap="round"/>`)}</button>
        <button class="cell" aria-label="WhatsApp">${icon(22, 22, svg`<path d="M.5 21.500L2 16A10.500 10.500 0 1 1 6 20z" fill="#fff"/><circle cx="11.300" cy="10.700" r="8.700" fill="#2fbf4e"/><path d="M2.600 19.400l1-4 3 3z" fill="#2fbf4e"/><path d="M8 6l1.600 3-1 1.300c1 1.700 2 2.500 3.600 3.200l1.300-1.300 2.600 1.300c0 2-2 2.700-3.300 2.300-4-1-6.300-4-6.800-6.800C6 7.500 7 6 8 6z" fill="#fff"/>`)}</button>
        <button class="cell on" aria-label="Explorador de Arquivos">${icon(22, 18, svg`<path d="M0 0h9l1.500 2H22v15H0z" fill="#fbcf53"/><path d="M0 0h9l1 2.500H0z" fill="#dd9a0c"/><path d="M4 18v-7h14v7h-4v-3.500H8V18z" fill="#2b8de0"/>`)}</button>
        <button class="cell run" aria-label="Discord">${icon(24, 24, svg`<rect x="1" y="1" width="19" height="19" rx="3" fill="#7289da"/><path d="M5 14c-.5-4 .5-7 2-8 3-.8 5-.8 8 0 1.500 1 2.500 4 2 8-1 1-2 1.300-3 1l-1-1.500H9L8 15c-1 .3-2 0-3-1z" fill="#fff"/><circle cx="8.500" cy="10.500" r="1.400" fill="#7289da"/><circle cx="13.500" cy="10.500" r="1.400" fill="#7289da"/><circle cx="17" cy="17" r="6.800" fill="#f04c50"/><circle cx="17" cy="17" r="2.600" fill="#fff"/>`)}</button>
      </div>
      <div class="tray">
        <button class="t" aria-label="Ícones ocultos">${icon(12, 7, line("M.7 6.300L6 1l5.300 5.300", "#fff", 1.3))}</button>
        <button class="t" aria-label="Volume">${icon(17, 14, line("M.7 4.500H3L6.300 1.500v11L3 9.500H.7zM8.500 5c1 1 1 3 0 4M11 3c2 2 2 6 0 8M13.500 1c3.300 3 3.300 9 0 12", "#fff", 1.1))}</button>
        <button class="t" aria-label="Rede">${icon(16, 14, line("M4 1.500h11.500v8h-11V6M4.500 13.500h8M8.500 10v3M.5.500h4v4h-4zM2.500 5v5h2", "#fff"))}</button>
        <div class="lang">POR<br />PTB2</div>
        <div class="clock">02:49<br />11/06/2020</div>
        <button class="t note" aria-label="Notificações">${icon(26, 26, svg`<path d="M1 3h16v12H7l-3 3v-3H1z" fill="#fff"/>${line("M4 6.500h10M4 9.500h10M4 12h6", "#222", 1.2)}<circle cx="16.500" cy="17.500" r="7.500" fill="#3f3f3f" stroke="#8d8d8d"/><path d="M14.300 16c0-3 4.500-3 4.500-.3 0 2-3 3-4.500 5.300h5" stroke="#fff" stroke-width="1.300"/>`)}</button>
        <span class="edge"></span>
      </div>`;
  }
}

@customElement("app-root")
export class AppRoot extends LitElement {
  static styles = [reset, css`
    :host { display: flex; flex-direction: column; height: 100vh; overflow: hidden; position: relative; }
    forum-page { flex: 1; }
    explorer-window { position: absolute; left: 144px; top: 172px; right: 91px; bottom: 47px; }
    .jump { position: absolute; right: 44px; bottom: 88px; display: grid; gap: 29px; }
  `];
  render() {
    return html`
      <browser-frame></browser-frame>
      <forum-page></forum-page>
      <div class="jump">
        <button aria-label="Ir ao topo">${icon(26, 15, line("M1.500 13.500L13 2l11.500 11.500", "#1e1e1e", 3))}</button>
        <button aria-label="Ir ao fim">${icon(26, 15, line("M1.500 1.500L13 13 24.500 1.500", "#1e1e1e", 3))}</button>
      </div>
      <explorer-window></explorer-window>
      <task-bar></task-bar>`;
  }
}
